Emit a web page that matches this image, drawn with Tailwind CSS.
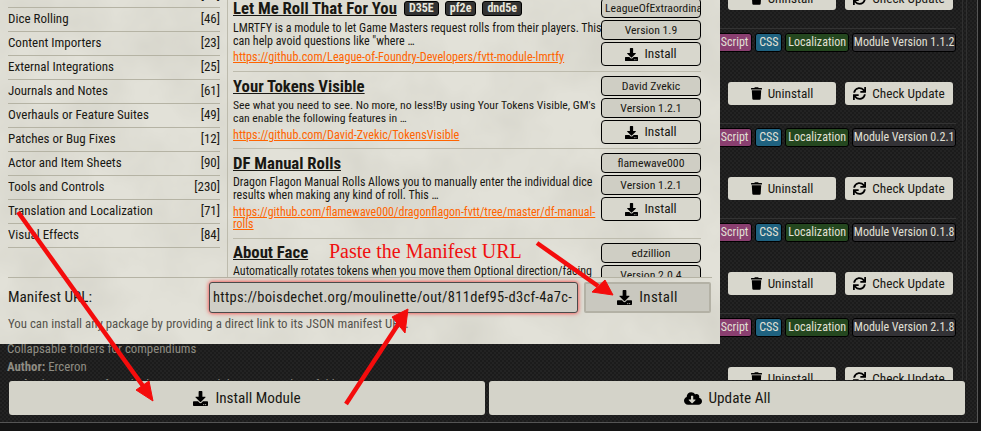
<!DOCTYPE html>
<html lang="en">
<head>
    <meta charset="UTF-8">
    <meta name="viewport" content="width=device-width, initial-scale=1.0">
    <title>Install Module</title>
    <script src="https://cdn.jsdelivr.net/npm/@tailwindcss/browser@4"></script>
</head>
<body class="bg-[#141414]">
    <!-- icons shared by every button, and the parchment grain -->
    <svg class="absolute w-0 h-0">
        <filter id="grain" x="0" y="0" width="100%" height="100%">
            <feTurbulence type="fractalNoise" baseFrequency="0.012" numOctaves="4" seed="7"/>
            <feColorMatrix values="0 0 0 0 0.35  0 0 0 0 0.34  0 0 0 0 0.28  0.35 0 0 0 -0.12"/>
        </filter>
        <symbol id="i-download" viewBox="0 0 512 512"><path d="M216 0h80c13.3 0 24 10.7 24 24v168h87.7c17.8 0 26.7 21.5 14.1 34.1L269.7 378.3c-7.5 7.5-19.8 7.5-27.3 0L90.1 226.1c-12.6-12.6-3.7-34.1 14.1-34.1H192V24c0-13.3 10.7-24 24-24zm296 376v112c0 13.3-10.7 24-24 24H24c-13.3 0-24-10.7-24-24V376c0-13.3 10.7-24 24-24h146.7l49 49c20.1 20.1 52.5 20.1 72.6 0l49-49H488c13.3 0 24 10.7 24 24zm-124 88c0-11-9-20-20-20s-20 9-20 20 9 20 20 20 20-9 20-20zm64 0c0-11-9-20-20-20s-20 9-20 20 9 20 20 20 20-9 20-20z"/></symbol>
        <symbol id="i-trash" viewBox="0 0 448 512"><path d="M432 32H312l-9.4-18.7A24 24 0 0 0 281.1 0H166.8a23.72 23.72 0 0 0-21.4 13.3L136 32H16A16 16 0 0 0 0 48v32a16 16 0 0 0 16 16h416a16 16 0 0 0 16-16V48a16 16 0 0 0-16-16zM53.2 467a48 48 0 0 0 47.9 45h245.8a48 48 0 0 0 47.9-45L416 128H32z"/></symbol>
        <symbol id="i-sync" viewBox="0 0 512 512"><path d="M440.65 12.57l4 82.77A247.16 247.16 0 0 0 255.83 8C134.73 8 33.91 94.92 12.29 209.82A12 12 0 0 0 24.09 224h49.05a12 12 0 0 0 11.67-9.26 175.91 175.91 0 0 1 317-56.94l-101.46-4.86a12 12 0 0 0-12.57 12v47.41a12 12 0 0 0 12 12H500a12 12 0 0 0 12-12V12a12 12 0 0 0-12-12h-47.37a12 12 0 0 0-11.98 12.57zM255.83 432a175.61 175.61 0 0 1-146-77.8l101.8 4.87a12 12 0 0 0 12.57-12v-47.4a12 12 0 0 0-12-12H12a12 12 0 0 0-12 12V500a12 12 0 0 0 12 12h47.35a12 12 0 0 0 12-12.6l-4.15-82.57A247.17 247.17 0 0 0 255.83 504c121.11 0 221.93-86.92 243.55-201.82a12 12 0 0 0-11.8-14.18h-49.05a12 12 0 0 0-11.67 9.26A175.86 175.86 0 0 1 255.83 432z"/></symbol>
        <symbol id="i-cloud" viewBox="0 0 640 512"><path d="M537.6 226.6c4.1-10.7 6.4-22.4 6.4-34.6 0-53-43-96-96-96-19.7 0-38.1 6-53.3 16.2C367 64.2 315.3 32 256 32c-88.4 0-160 71.6-160 160 0 2.7.1 5.4.2 8.1C40.2 219.8 0 273.2 0 336c0 79.5 64.5 144 144 144h368c70.7 0 128-57.3 128-128 0-61.9-44-113.6-102.4-125.4zm-132.9 88.7L299.3 420.7c-6.2 6.2-16.4 6.2-22.6 0L171.3 315.3c-10.1-10.1-2.9-27.3 11.3-27.3H248V176c0-8.8 7.2-16 16-16h48c8.8 0 16 7.2 16 16v112h65.4c14.2 0 21.4 17.2 11.3 27.3z"/></symbol>
    </svg>

    <div class="relative w-[981px] h-[431px] overflow-hidden font-['Roboto',sans-serif] font-stretch-[80%]">

        <!-- module list window behind the dialog -->
        <div class="w-[978px] h-[423px] border-r border-b border-[#555] bg-[repeating-conic-gradient(#232323_0_25%,#1b1b1b_0_50%)] bg-size-[4px_4px] flex flex-col">
            <div class="h-[380px] flex">
                <div class="w-[956px] h-[380px] overflow-hidden">
                    <div class="-mt-[66px]">

                        <div class="h-[95px] border-b border-[#333] flex justify-end">
                            <div class="w-[255px] pt-[4px]">
                                <div class="h-[49px]"></div>
                                <div class="flex gap-[9px] pl-[27px]">
                                    <button class="w-[108px] h-[23px] rounded-[3px] bg-[#d8d7cd] flex items-center justify-center gap-[6px] text-[13.25px] text-[#191813]"><svg class="w-[11px] h-[13px]"><use href="#i-trash"/></svg>Uninstall</button>
                                    <button class="w-[108px] h-[23px] rounded-[3px] bg-[#d8d7cd] flex items-center justify-center gap-[6px] text-[13.25px] text-[#191813]"><svg class="w-[13px] h-[13px]"><use href="#i-sync"/></svg>Check Update</button>
                                </div>
                            </div>
                        </div>

                        <div class="h-[95px] border-b border-[#333] flex justify-end">
                            <div class="w-[255px] pt-[4px]">
                                <div class="h-[19px] flex justify-end gap-[3px] text-[12px] text-[#e2e0d6] leading-[17px] text-center">
                                    <span class="w-[52px] rounded-[3px] border border-black bg-[#8a3f70] whitespace-nowrap overflow-hidden flex justify-end pr-[3px]">Script</span>
                                    <span class="w-[27px] rounded-[3px] border border-black bg-[#1f6280]">CSS</span>
                                    <span class="w-[65px] rounded-[3px] border border-black bg-[#24471f] whitespace-nowrap">Localization</span>
                                    <span class="w-[105px] rounded-[3px] border border-black bg-[#333236] whitespace-nowrap">Module Version 1.1.2</span>
                                </div>
                                <div class="h-[30px]"></div>
                                <div class="flex gap-[9px] pl-[27px]">
                                    <button class="w-[108px] h-[23px] rounded-[3px] bg-[#d8d7cd] flex items-center justify-center gap-[6px] text-[13.25px] text-[#191813]"><svg class="w-[11px] h-[13px]"><use href="#i-trash"/></svg>Uninstall</button>
                                    <button class="w-[108px] h-[23px] rounded-[3px] bg-[#d8d7cd] flex items-center justify-center gap-[6px] text-[13.25px] text-[#191813]"><svg class="w-[13px] h-[13px]"><use href="#i-sync"/></svg>Check Update</button>
                                </div>
                            </div>
                        </div>

                        <div class="h-[95px] border-b border-[#333] flex justify-end">
                            <div class="w-[255px] pt-[4px]">
                                <div class="h-[19px] flex justify-end gap-[3px] text-[12px] text-[#e2e0d6] leading-[17px] text-center">
                                    <span class="w-[52px] rounded-[3px] border border-black bg-[#8a3f70] whitespace-nowrap overflow-hidden flex justify-end pr-[3px]">Script</span>
                                    <span class="w-[27px] rounded-[3px] border border-black bg-[#1f6280]">CSS</span>
                                    <span class="w-[65px] rounded-[3px] border border-black bg-[#24471f] whitespace-nowrap">Localization</span>
                                    <span class="w-[105px] rounded-[3px] border border-black bg-[#333236] whitespace-nowrap">Module Version 0.2.1</span>
                                </div>
                                <div class="h-[30px]"></div>
                                <div class="flex gap-[9px] pl-[27px]">
                                    <button class="w-[108px] h-[23px] rounded-[3px] bg-[#d8d7cd] flex items-center justify-center gap-[6px] text-[13.25px] text-[#191813]"><svg class="w-[11px] h-[13px]"><use href="#i-trash"/></svg>Uninstall</button>
                                    <button class="w-[108px] h-[23px] rounded-[3px] bg-[#d8d7cd] flex items-center justify-center gap-[6px] text-[13.25px] text-[#191813]"><svg class="w-[13px] h-[13px]"><use href="#i-sync"/></svg>Check Update</button>
                                </div>
                            </div>
                        </div>

                        <div class="h-[95px] border-b border-[#333] flex justify-end">
                            <div class="w-[255px] pt-[4px]">
                                <div class="h-[19px] flex justify-end gap-[3px] text-[12px] text-[#e2e0d6] leading-[17px] text-center">
                                    <span class="w-[52px] rounded-[3px] border border-black bg-[#8a3f70] whitespace-nowrap overflow-hidden flex justify-end pr-[3px]">Script</span>
                                    <span class="w-[27px] rounded-[3px] border border-black bg-[#1f6280]">CSS</span>
                                    <span class="w-[65px] rounded-[3px] border border-black bg-[#24471f] whitespace-nowrap">Localization</span>
                                    <span class="w-[105px] rounded-[3px] border border-black bg-[#333236] whitespace-nowrap">Module Version 0.1.8</span>
                                </div>
                                <div class="h-[30px]"></div>
                                <div class="flex gap-[9px] pl-[27px]">
                                    <button class="w-[108px] h-[23px] rounded-[3px] bg-[#d8d7cd] flex items-center justify-center gap-[6px] text-[13.25px] text-[#191813]"><svg class="w-[11px] h-[13px]"><use href="#i-trash"/></svg>Uninstall</button>
                                    <button class="w-[108px] h-[23px] rounded-[3px] bg-[#d8d7cd] flex items-center justify-center gap-[6px] text-[13.25px] text-[#191813]"><svg class="w-[13px] h-[13px]"><use href="#i-sync"/></svg>Check Update</button>
                                </div>
                            </div>
                        </div>

                        <div class="flex justify-between">
                            <div class="pl-[7px] pt-[26px] text-[12.8px] text-[#8f8d83] leading-[18px]">
                                <p>Collapsable folders for compendiums</p>
                                <p><b>Author:</b> Erceron</p>
                                <p class="whitespace-nowrap"><b>Path:</b> /home/www/foundrydata/Data/modules/compendium-folders</p>
                            </div>
                            <div class="w-[255px] pt-[4px]">
                                <div class="h-[19px] flex justify-end gap-[3px] text-[12px] text-[#e2e0d6] leading-[17px] text-center">
                                    <span class="w-[52px] rounded-[3px] border border-black bg-[#8a3f70] whitespace-nowrap overflow-hidden flex justify-end pr-[3px]">Script</span>
                                    <span class="w-[27px] rounded-[3px] border border-black bg-[#1f6280]">CSS</span>
                                    <span class="w-[65px] rounded-[3px] border border-black bg-[#24471f] whitespace-nowrap">Localization</span>
                                    <span class="w-[105px] rounded-[3px] border border-black bg-[#333236] whitespace-nowrap">Module Version 2.1.8</span>
                                </div>
                                <div class="h-[30px]"></div>
                                <div class="flex gap-[9px] pl-[27px]">
                                    <button class="w-[108px] h-[23px] rounded-[3px] bg-[#d8d7cd] flex items-center justify-center gap-[6px] text-[13.25px] text-[#191813]"><svg class="w-[11px] h-[13px]"><use href="#i-trash"/></svg>Uninstall</button>
                                    <button class="w-[108px] h-[23px] rounded-[3px] bg-[#d8d7cd] flex items-center justify-center gap-[6px] text-[13.25px] text-[#191813]"><svg class="w-[13px] h-[13px]"><use href="#i-sync"/></svg>Check Update</button>
                                </div>
                            </div>
                        </div>

                    </div>
                </div>
                <div class="w-[5px] h-[380px] ml-[6px] border-x border-[#303030]"></div>
            </div>
            <div class="flex gap-[4px] pl-[9px] pt-[1px]">
                <button class="w-[476px] h-[34px] rounded-[3px] bg-[#d4d3c9] flex items-center justify-center gap-[7px] text-[15.25px] text-[#191813]"><svg class="w-[15px] h-[15px]"><use href="#i-download"/></svg>Install Module</button>
                <button class="w-[476px] h-[34px] rounded-[3px] bg-[#d4d3c9] flex items-center justify-center gap-[7px] text-[15.25px] text-[#191813]"><svg class="w-[18px] h-[15px]"><use href="#i-cloud"/></svg>Update All</button>
            </div>
        </div>

        <!-- install module dialog -->
        <div class="absolute left-0 top-0 w-[720px] h-[344px] bg-[#e2e1d8] text-[#191813]">
            <svg class="absolute inset-0 w-full h-full"><rect width="720" height="344" filter="url(#grain)"/></svg>
            <div class="relative h-[278px] ml-[8px] w-[704px] border-b border-[#b5b3a4] flex overflow-hidden">

                <div class="w-[220px] border-r border-[#bdbbad] pr-[7px] shrink-0 h-[277px]">
                    <div class="-mt-[16px] text-[13px] leading-[22px]">
                        <div class="h-[24px] border-b border-[#b5b3a4] flex justify-end"><span>[18]</span></div>
                        <div class="h-[24px] border-b border-[#b5b3a4] flex justify-between"><span>Dice Rolling</span><span>[46]</span></div>
                        <div class="h-[24px] border-b border-[#b5b3a4] flex justify-between"><span>Content Importers</span><span>[23]</span></div>
                        <div class="h-[24px] border-b border-[#b5b3a4] flex justify-between"><span>External Integrations</span><span>[25]</span></div>
                        <div class="h-[24px] border-b border-[#b5b3a4] flex justify-between"><span>Journals and Notes</span><span>[61]</span></div>
                        <div class="h-[24px] border-b border-[#b5b3a4] flex justify-between"><span>Overhauls or Feature Suites</span><span>[49]</span></div>
                        <div class="h-[24px] border-b border-[#b5b3a4] flex justify-between"><span>Patches or Bug Fixes</span><span>[12]</span></div>
                        <div class="h-[24px] border-b border-[#b5b3a4] flex justify-between"><span>Actor and Item Sheets</span><span>[90]</span></div>
                        <div class="h-[24px] border-b border-[#b5b3a4] flex justify-between"><span>Tools and Controls</span><span>[230]</span></div>
                        <div class="h-[24px] border-b border-[#b5b3a4] flex justify-between"><span>Translation and Localization</span><span>[71]</span></div>
                        <div class="h-[24px] border-b border-[#b5b3a4] flex justify-between"><span>Visual Effects</span><span>[84]</span></div>
                    </div>
                </div>

                <div class="w-[468px] ml-[5px] h-[277px] overflow-hidden">
                    <div class="-mt-[6px]">
                        <div class="h-[78px] border-b border-[#bdbbad] flex justify-between">
                            <div class="w-[366px]">
                                <h2 class="text-[16.75px] font-bold leading-[24px] h-[28px] flex items-center gap-[6px] whitespace-nowrap"><span class="underline">Let Me Roll That For You</span>
                                    <span class="rounded-[3px] border border-black bg-[#333] text-[#e8e6dc] text-[12px] leading-[13px] px-[4px] ml-[1px]">D35E</span><span class="rounded-[3px] border border-black bg-[#333] text-[#e8e6dc] text-[12px] leading-[13px] px-[4px]">pf2e</span><span class="rounded-[3px] border border-black bg-[#333] text-[#e8e6dc] text-[12px] leading-[13px] px-[4px]">dnd5e</span></h2>
                                <p class="text-[12px] leading-[13px] whitespace-nowrap">LMRTFY is a module to let Game Masters request rolls from their players. This<br>can help avoid questions like "where …</p>
                                <a class="block text-[12.2px] leading-[18px] text-[#ff6400] underline whitespace-nowrap">https://github.com/League-of-Foundry-Developers/fvtt-module-lmrtfy</a>
                            </div>
                            <div class="w-[100px] pt-[4px] flex flex-col gap-[2px] text-[11.75px] text-center">
                                <div class="h-[20px] rounded-[4px] border border-black bg-[#cfcec4] leading-[18px] overflow-hidden whitespace-nowrap text-left pl-[3px]">LeagueOfExtraordinaryFoundryVTTDevelopers</div>
                                <div class="h-[20px] rounded-[4px] border border-black bg-[#cfcec4] leading-[18px]">Version 1.9</div>
                                <button class="h-[24px] w-[100px] rounded-[4px] border border-black bg-[#d8d7cd] flex items-center justify-center gap-[6px] text-[13.25px]"><svg class="w-[13px] h-[13px]"><use href="#i-download"/></svg>Install</button>
                            </div>
                        </div>

                        <div class="h-[77px] border-b border-[#bdbbad] flex justify-between">
                            <div class="w-[366px]">
                                <h2 class="text-[16.75px] font-bold leading-[24px] h-[27px] flex items-center whitespace-nowrap"><span class="underline">Your Tokens Visible</span></h2>
                                <p class="text-[11.7px] leading-[13px] whitespace-nowrap">See what you need to see. No more, no less!By using Your Tokens Visible, GM's<br>can enable the following features in …</p>
                                <a class="block text-[12.2px] leading-[20px] text-[#ff6400] underline whitespace-nowrap">https://github.com/David-Zvekic/TokensVisible</a>
                            </div>
                            <div class="w-[100px] pt-[4px] flex flex-col gap-[2px] text-[11.75px] text-center">
                                <div class="h-[20px] rounded-[4px] border border-black bg-[#cfcec4] leading-[18px]">David Zvekic</div>
                                <div class="h-[20px] rounded-[4px] border border-black bg-[#cfcec4] leading-[18px]">Version 1.2.1</div>
                                <button class="h-[24px] w-[100px] rounded-[4px] border border-black bg-[#d8d7cd] flex items-center justify-center gap-[6px] text-[13.25px]"><svg class="w-[13px] h-[13px]"><use href="#i-download"/></svg>Install</button>
                            </div>
                        </div>

                        <div class="h-[90px] border-b border-[#bdbbad] flex justify-between">
                            <div class="w-[366px]">
                                <h2 class="text-[16.75px] font-bold leading-[24px] h-[27px] flex items-center whitespace-nowrap"><span class="underline">DF Manual Rolls</span></h2>
                                <p class="text-[12px] leading-[13px] whitespace-nowrap">Dragon Flagon Manual Rolls Allows you to manually enter the individual dice<br>results when making any kind of roll. This …</p>
                                <a class="block text-[12px] leading-[12px] pt-[4px] text-[#ff6400] underline whitespace-nowrap">https://github.com/flamewave000/dragonflagon-fvtt/tree/master/df-manual-<br>rolls</a>
                            </div>
                            <div class="w-[100px] pt-[4px] flex flex-col gap-[2px] text-[11.75px] text-center">
                                <div class="h-[20px] rounded-[4px] border border-black bg-[#cfcec4] leading-[18px]">flamewave000</div>
                                <div class="h-[20px] rounded-[4px] border border-black bg-[#cfcec4] leading-[18px]">Version 1.2.1</div>
                                <button class="h-[24px] w-[100px] rounded-[4px] border border-black bg-[#d8d7cd] flex items-center justify-center gap-[6px] text-[13.25px]"><svg class="w-[13px] h-[13px]"><use href="#i-download"/></svg>Install</button>
                            </div>
                        </div>

                        <div class="flex justify-between">
                            <div class="w-[366px]">
                                <h2 class="text-[16.75px] font-bold leading-[24px] h-[26px] flex items-center whitespace-nowrap"><span class="underline">About Face</span></h2>
                                <p class="text-[12px] leading-[13px] whitespace-nowrap">Automatically rotates tokens when you move them Optional direction/facing</p>
                            </div>
                            <div class="w-[100px] pt-[4px] flex flex-col gap-[2px] text-[11.75px] text-center">
                                <div class="h-[20px] rounded-[4px] border border-black bg-[#cfcec4] leading-[18px]">edzillion</div>
                                <div class="h-[20px] rounded-[4px] border border-black bg-[#cfcec4] leading-[18px]">Version 2.0.4</div>
                            </div>
                        </div>
                    </div>
                </div>
            </div>

            <div class="relative flex items-center pl-[8px] pt-[4px]">
                <label class="w-[201px] text-[15.25px]">Manifest URL:</label>
                <div class="w-[369px] h-[31px] rounded-[3px] border border-[#4a4a4a] bg-[#cfcec6] shadow-[0_0_4px_#ff3030] flex items-center pl-[3px] text-[14.5px] tracking-[0.3px] whitespace-nowrap overflow-hidden">https://boisdechet.org/moulinette/out/811def95-d3cf-4a7c-</div>
                <button class="w-[127px] h-[31px] ml-[6px] rounded-[2px] border-2 border-[#b3b1a5] bg-[#c9c8bf] flex items-center justify-center gap-[7px] text-[15px] tracking-[0.3px]"><svg class="w-[15px] h-[15px]"><use href="#i-download"/></svg>Install</button>
            </div>
            <p class="relative pl-[8px] pt-[1px] text-[12.85px] text-[#55534c]">You can install any package by providing a direct link to its JSON manifest URL.</p>
        </div>

        <!-- annotations drawn on top of the screenshot -->
        <span class="absolute left-[329px] top-[239px] font-['Liberation_Serif',serif] text-[20px] leading-[24px] text-[#f01010] whitespace-nowrap">Paste the Manifest URL</span>
        <svg class="absolute left-0 top-0" width="981" height="431" viewBox="0 0 981 431">
            <g fill="#f40c0c" stroke="#f40c0c">
                <line x1="18" y1="212" x2="143" y2="386" stroke-width="4.5"/>
                <polygon points="153,401 136,390 149,381" stroke-width="1"/>
                <line x1="346" y1="404" x2="399" y2="323" stroke-width="4.5"/>
                <polygon points="408,309 392,317 405,333" stroke-width="1"/>
                <line x1="537" y1="243" x2="598" y2="286" stroke-width="4.5"/>
                <polygon points="613,295 592,292 605,280" stroke-width="1"/>
            </g>
        </svg>
    </div>
</body>
</html>
